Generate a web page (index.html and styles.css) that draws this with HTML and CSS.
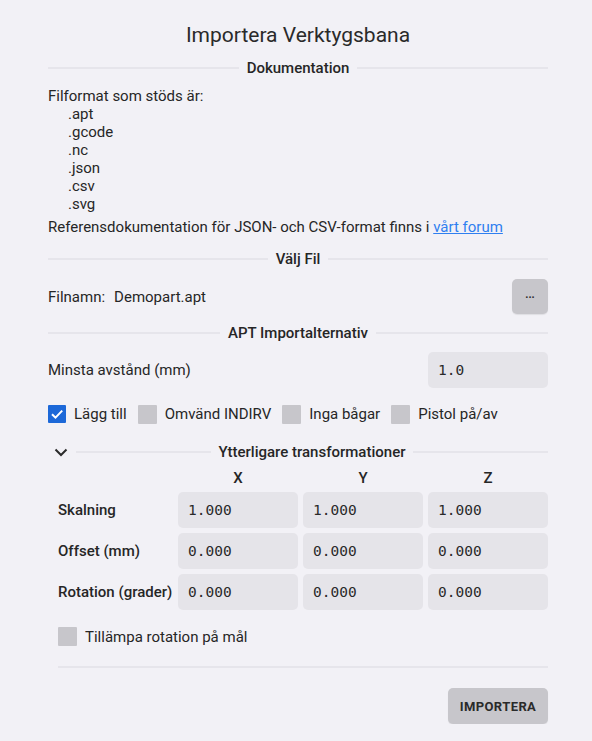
FILE: index.html
```html
<!DOCTYPE html>
<html lang="sv">
<head>
<meta charset="utf-8">
<title>Importera Verktygsbana</title>
<link rel="stylesheet" href="styles.css">
</head>
<body>
<div class="dialog">
  <h1 class="title">Importera Verktygsbana</h1>

  <div class="divider"><span>Dokumentation</span></div>
  <p class="text formats-head">Filformat som stöds är:</p>
  <ul class="formats">
    <li>.apt</li>
    <li>.gcode</li>
    <li>.nc</li>
    <li>.json</li>
    <li>.csv</li>
    <li>.svg</li>
  </ul>
  <p class="text ref">Referensdokumentation för JSON- och CSV-format finns i <a href="#">vårt forum</a></p>

  <div class="divider sec"><span>Välj Fil</span></div>
  <div class="file-row">
    <span class="file-label">Filnamn:</span>
    <span class="file-name">Demopart.apt</span>
    <button class="btn btn-dots">...</button>
  </div>

  <div class="divider sec-apt"><span>APT Importalternativ</span></div>
  <div class="field-row">
    <span class="field-label">Minsta avstånd (mm)</span>
    <div class="input wide">1.0</div>
  </div>

  <div class="checks">
    <label class="check"><span class="box checked"><svg viewBox="0 0 18 18" width="18" height="18"><path d="M4 9.2 L7.5 12.6 L14.2 5.6" fill="none" stroke="#fff" stroke-width="2"/></svg></span>Lägg till</label>
    <label class="check"><span class="box"></span>Omvänd INDIRV</label>
    <label class="check"><span class="box"></span>Inga bågar</label>
    <label class="check"><span class="box"></span>Pistol på/av</label>
  </div>

  <div class="collapse-head">
    <svg class="chevron" viewBox="0 0 16 16" width="16" height="16"><path d="M2.5 5.5 L8 11 L13.5 5.5" fill="none" stroke="#2b2b2b" stroke-width="2"/></svg>
    <div class="divider grow"><span>Ytterligare transformationer</span></div>
  </div>

  <div class="transform">
    <div class="grid">
      <span></span>
      <span class="axis">X</span>
      <span class="axis">Y</span>
      <span class="axis">Z</span>

      <span class="row-label">Skalning</span>
      <div class="input">1.000</div>
      <div class="input">1.000</div>
      <div class="input">1.000</div>

      <span class="row-label">Offset (mm)</span>
      <div class="input">0.000</div>
      <div class="input">0.000</div>
      <div class="input">0.000</div>

      <span class="row-label">Rotation (grader)</span>
      <div class="input">0.000</div>
      <div class="input">0.000</div>
      <div class="input">0.000</div>
    </div>
    <label class="check apply"><span class="box"></span>Tillämpa rotation på mål</label>
    <hr class="rule">
  </div>

  <div class="actions">
    <button class="btn btn-import">IMPORTERA</button>
  </div>
</div>
</body>
</html>
```

FILE: styles.css
```css
* { box-sizing: border-box; }

html, body {
  margin: 0;
  background: #f2f1f6;
}

body {
  font-family: Roboto, "Noto Sans", "Liberation Sans", sans-serif;
  font-size: 15px;
  color: #262626;
}

.dialog {
  padding: 23px 44px 0 48px;
}

.title {
  margin: 0;
  font-size: 21px;
  font-weight: 400;
  line-height: 24px;
  text-align: center;
  color: #2a2a2a;
}

.divider {
  display: flex;
  align-items: center;
  gap: 8px;
  height: 20px;
  margin-top: 11px;
  font-weight: 500;
  color: #262626;
}

.divider::before,
.divider::after {
  content: "";
  flex: 1;
  height: 2px;
  background: #e6e5eb;
}

.text {
  margin: 0;
  line-height: 18px;
}

.formats-head { margin-top: 9px; }

.formats {
  list-style: none;
  margin: 0;
  padding: 0 0 0 20px;
  line-height: 18px;
}

.ref { margin-top: 5px; }

.ref a {
  color: #2f7ff0;
  text-decoration: underline;
}

.sec { margin-top: 13px; }

.file-row {
  display: flex;
  align-items: center;
  margin-top: 10px;
}

.file-label { margin-right: 9px; }

.file-name { flex: 1; }

.btn {
  border: none;
  border-radius: 5px;
  background: #c7c6cb;
  font-family: Roboto, "Liberation Sans", sans-serif;
  color: #2a2a2a;
  box-shadow: 0 1px 1px rgba(0,0,0,0.08);
}

.btn-dots {
  width: 36px;
  height: 35px;
  font-size: 11px;
  font-weight: 700;
  padding: 0 0 4px;
}

.sec-apt { margin-top: 9px; }

.field-row {
  display: flex;
  align-items: center;
  justify-content: space-between;
  margin-top: 9px;
}

.input {
  height: 36px;
  display: flex;
  align-items: center;
  padding: 0 10px;
  border-radius: 5px;
  background: #e5e4e9;
  font-family: "DejaVu Sans Mono", "Liberation Mono", monospace;
  font-size: 14.5px;
  color: #2a2a2a;
}

.input.wide { width: 120px; }

.checks {
  display: flex;
  align-items: center;
  gap: 11px;
  margin-top: 17px;
  height: 18px;
}

.check {
  display: flex;
  align-items: center;
  gap: 8px;
  line-height: 18px;
}

.box {
  width: 19px;
  height: 19px;
  background: #c7c6cb;
  border-radius: 1px;
  display: block;
}

.box.checked {
  background: #1c68d8;
  width: 18px;
  height: 18px;
}

.box svg { display: block; }

.collapse-head {
  display: flex;
  align-items: center;
  gap: 7px;
  margin-top: 19px;
  padding-left: 5px;
}

.chevron { flex: none; }

.divider.grow {
  flex: 1;
  margin-top: 0;
}

.transform {
  padding-left: 10px;
}

.grid {
  display: grid;
  grid-template-columns: 115px 120px 120px 120px;
  grid-template-rows: 19px 36px 36px 36px;
  column-gap: 5px;
  row-gap: 5px;
  margin-top: 6px;
  align-items: center;
}

.axis {
  text-align: center;
  font-weight: 500;
}

.row-label {
  font-weight: 500;
  white-space: nowrap;
}

.apply {
  margin-top: 17px;
}

.rule {
  border: none;
  height: 2px;
  background: #e6e5eb;
  margin: 20px 0 0;
}

.actions {
  display: flex;
  justify-content: flex-end;
  margin-top: 20px;
}

.btn-import {
  width: 100px;
  height: 36px;
  font-size: 13px;
  font-weight: 700;
  letter-spacing: 0.4px;
  padding: 0;
}
```
